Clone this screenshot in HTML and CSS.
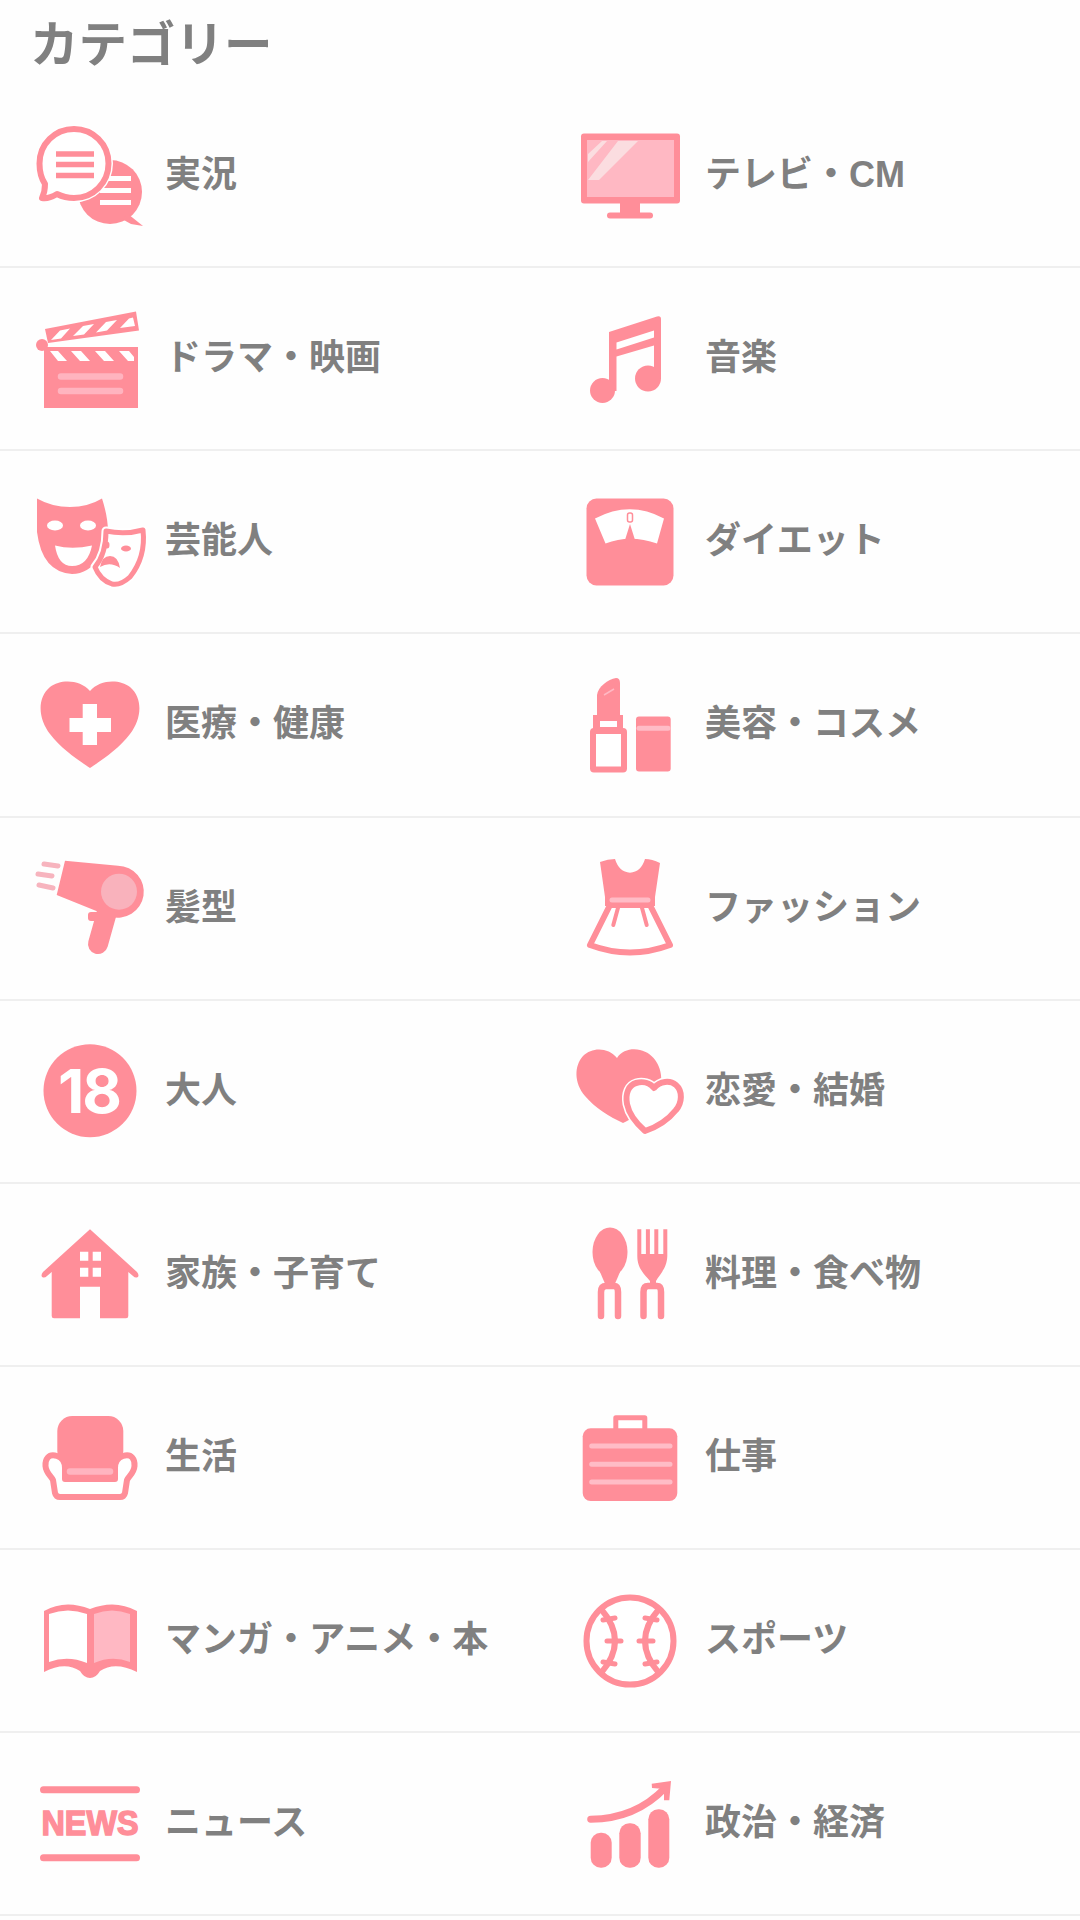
FILE: index.html
```html
<!DOCTYPE html>
<html lang="ja">
<head>
<meta charset="utf-8">
<title>カテゴリー</title>
<link rel="stylesheet" href="styles.css">
</head>
<body>
<main class="page">
<h1 class="title">カテゴリー</h1>
<ul class="grid">

<li class="cell"><svg class="icon" viewBox="0 0 120 120">
<circle class="f" cx="80" cy="76" r="32"/><path class="f" d="M98 98L113 110L101 108L92 103Z"/>
<path class="wl" d="M70 62.500H101M70 74.500H101M70 86.500H101"/>
<circle class="h" cx="44" cy="47.500" r="39"/>
<path class="o6" d="M44 13C63 13 78.500 28 78.500 47.500S63 82 44 82C38 82 32 80.500 27 78C22 81 17 83 12 82C14 78 15 74 15 68C11 62 9.500 55 9.500 47.500C9.500 28 25 13 44 13Z"/>
<path class="fl" d="M26 38H64M26 48.500H64M26 59.500H64"/>
</svg><span class="label">実況</span></li>

<li class="cell"><svg class="icon" viewBox="0 0 120 120">
<rect class="f" x="11" y="17.500" width="99" height="70" rx="3"/>
<rect class="l" x="17" y="24" width="87" height="57"/>
<path class="g" d="M18 38L32 25H37L18 46ZM18 64L48 25H68L29 64Z"/>
<rect class="f" x="50" y="87" width="20" height="11"/><rect class="f" x="37" y="96.500" width="46" height="6" rx="3"/>
</svg><span class="label">テレビ・CM</span></li>

<li class="cell"><svg class="icon" viewBox="0 0 120 120">
<path class="f" d="M15 30L106 12.500L109 31.500L18 44Z"/>
<path class="w" d="M21 41L30 31.500L40 29.500L31 39.500ZM43 37L53 27L64 25L54 35.500ZM66 33.500L76 23L87 21L77 31.500ZM90 29L99 19.500L103 18.500L105 27Z"/>
<circle class="f" cx="12" cy="46" r="6"/>
<rect class="f" x="14" y="48" width="94" height="61"/>
<path class="w" d="M20 52H28L37 62H28ZM41 52H51L60 62H50ZM65 52H75L84 62H74ZM89 52H99L104 58V62H98Z"/>
<path class="ll6" d="M31 77.500H90M31 92H90"/>
</svg><span class="label">ドラマ・映画</span></li>

<li class="cell"><svg class="icon" viewBox="0 0 120 120">
<path class="f" d="M39 33L87 17.500Q91 16.500 91 20L91 80H84V46.500L46.500 57.500V92H39Z"/>
<path class="w" d="M46.500 43.500L84 31.500V38.500L46.500 50.500Z"/>
<circle class="f" cx="32.500" cy="91.500" r="12.500"/><circle class="f" cx="78" cy="79.500" r="13"/>
</svg><span class="label">音楽</span></li>

<li class="cell"><svg class="icon" viewBox="0 0 120 120">
<path class="f" d="M7 16.500Q22 25 40 25Q58 25 72 16.500Q78 35 78 50L72 74Q58 92 42 92Q12 90 7 50Z"/>
<ellipse class="w" cx="25" cy="43.500" rx="8" ry="5"/><ellipse class="w" cx="58" cy="43.500" rx="8" ry="5"/>
<path class="w" d="M25 63.500Q42 68 62 63.500Q58 84 42 84Q28 84 25 63.500Z"/>
<path class="hm" d="M76 49Q95 53 113 48Q116 75 100 95Q90 104 82 102Q70 98 65 85Q76 72 76 49Z"/>
<path class="o" d="M76 49Q95 53 113 48Q116 75 100 95Q90 104 82 102Q70 98 65 85Q76 72 76 49Z"/>
<ellipse class="f" cx="96" cy="66.500" rx="5" ry="3"/><ellipse class="f" cx="77" cy="63" rx="2.500" ry="3.500"/>
<path class="f" d="M70 85Q72 74 80 74Q88 74 90 86Q80 79 70 85Z"/>
</svg><span class="label">芸能人</span></li>

<li class="cell"><svg class="icon" viewBox="0 0 120 120">
<rect class="f" x="16.500" y="16.500" width="87" height="87" rx="10"/>
<path class="w" d="M25 36.500Q60 18 94 36.500L87 61.500Q60 52 35.500 61.500Z"/>
<path class="f" d="M60 42L65 58H55Z"/><rect class="f4" x="57.500" y="31" width="5" height="9" rx="2"/>
</svg><span class="label">ダイエット</span></li>

<li class="cell"><svg class="icon" viewBox="0 0 120 120">
<path class="f" d="M60 26C50 14 30 14 20 22C6 34 9 55 20 69C32 85 50 96 60 103C70 96 88 85 100 69C111 55 114 34 100 22C90 14 70 14 60 26Z"/>
<path class="w" d="M52.700 39H67V53H81V67H67V80H52.700V67H39.500V53H52.700Z"/>
</svg><span class="label">医療・健康</span></li>

<li class="cell"><svg class="icon" viewBox="0 0 120 120">
<path class="f" d="M27 50V30C28 22 38 14 46 13Q50 13 50 18V50Z"/>
<path class="al" d="M34 30L44 24"/>
<rect class="f" x="23" y="50" width="30" height="15"/><rect class="w" x="30" y="56" width="17" height="6"/>
<rect class="o6" x="23" y="66" width="31" height="38.500" rx="1"/>
<rect class="f" x="66" y="51.500" width="34.700" height="55" rx="3"/>
<path class="ll" d="M69 63.300H98"/>
</svg><span class="label">美容・コスメ</span></li>

<li class="cell"><svg class="icon" viewBox="0 0 120 120">
<path class="f" d="M35 12.700L88 17.700A26 26 0 1 1 80 68.500L26.700 47Z"/>
<path class="fr" d="M76.700 65L68 96"/>
<rect class="f" x="58" y="64" width="12" height="9" rx="3"/>
<circle class="d" cx="89" cy="43.700" r="18"/>
<path class="a" d="M14 16L28 18M8 26L22 28M9 37L23 40"/>
</svg><span class="label">髪型</span></li>

<li class="cell"><svg class="icon" viewBox="0 0 120 120">
<path class="f" d="M30 14Q38 11 45 11Q49 24 60 24.700Q71 24 75 11Q82 11 90 15L85 49H35Z"/>
<path class="o6" d="M40 57L20 97Q60 112 100 97L80 57Z"/>
<rect class="f" x="35" y="47" width="50" height="11"/><path class="ll" d="M42 52H78"/>
<path class="o4" d="M48.300 58.700L43.300 77M71.700 58.700L76.700 77"/>
</svg><span class="label">ファッション</span></li>

<li class="cell"><svg class="icon" viewBox="0 0 120 120">
<circle class="f" cx="60" cy="59.700" r="46.500"/>
<text class="num" x="60" y="82" textLength="64">18</text>
</svg><span class="label">大人</span></li>

<li class="cell"><svg class="icon" viewBox="0 0 120 120">
<path class="f" d="M47 27C52 19 62 17 70 19C84 22 93 37 91 52C89 70 70 84 53 92C40 86 25 77 15 65C4 52 4 35 13 25C22 16 38 16 47 27Z"/>
<path class="hm" d="M84 57C90 50 100 49 106 54C113 60 112 72 106 79C98 89 87 96 75 100C67 93 59 83 57 73C55 62 59 54 66 52C73 50 80 52 84 57Z"/>
<path class="o6" d="M84 57C90 50 100 49 106 54C113 60 112 72 106 79C98 89 87 96 75 100C67 93 59 83 57 73C55 62 59 54 66 52C73 50 80 52 84 57Z"/>
</svg><span class="label">恋愛・結婚</span></li>

<li class="cell"><svg class="icon" viewBox="0 0 120 120">
<path class="f" d="M60 15.300L107 58Q110 62 107 63.500Q105 64 103 62L98.300 58V102Q98.300 104.300 96 104.300H70V72.700H50V104.300H24Q21.700 104.300 21.700 102V58L17 62Q15 64 13 63.500Q10 62 13 58Z"/>
<path class="w" d="M50 37.700H58.300V46.700H50ZM62.700 37.700H71V46.700H62.700ZM50 53.700H58.300V62.700H50ZM62.700 53.700H71V62.700H62.700Z"/>
</svg><span class="label">家族・子育て</span></li>

<li class="cell"><svg class="icon" viewBox="0 0 120 120">
<ellipse class="f" cx="40" cy="38" rx="17.500" ry="24.500"/>
<path class="f" d="M30 58L36 72H44L50 58Z"/>
<path class="o5" d="M31 102V78Q31 72 36 72H44Q48 72 48 78V102"/>
<path class="o5" d="M73.500 102V78Q73.500 72 78 72H87Q91 72 91 78V102"/>
<path class="f" d="M67.300 15.300H71.300V40H75.900V15.300H79.900V40H84.300V15.300H88.300V40H93.300V15.300H97.300V42C97 54 90 60 86 67V74H80V67C74 60 67.300 54 67.300 42Z"/>
</svg><span class="label">料理・食べ物</span></li>

<li class="cell"><svg class="icon" viewBox="0 0 120 120">
<path class="o6" d="M27 58C18 55 15 62 15.500 68C16 75 21 78 23 82L25 95Q26 99 30 99H90Q94 99 95 95L97 82C99 78 104 75 104.500 68C105 62 102 55 93 58C87 60 85 65 85 70V81H35V70C35 65 33 60 27 58Z"/>
<rect class="f" x="27.300" y="18" width="66" height="50" rx="15"/>
<rect class="f" x="35" y="64" width="50" height="17.500" rx="4"/>
<path class="ll6" d="M40 73.500H80"/>
</svg><span class="label">生活</span></li>

<li class="cell"><svg class="icon" viewBox="0 0 120 120">
<rect class="o" x="45.800" y="19.800" width="29" height="15"/>
<rect class="f" x="12.700" y="30.300" width="94.600" height="72.700" rx="8"/>
<path class="ll" d="M21.700 48H100M21.700 66.300H100M21.700 84H100"/>
</svg><span class="label">仕事</span></li>

<li class="cell"><svg class="icon" viewBox="0 0 120 120">
<path class="f" d="M14 30Q35 18 60 28Q85 18 107 30V91Q85 80 70 90Q66 97 60 97Q54 97 50 90Q35 80 14 91Z"/>
<path class="w" d="M19 33Q38 26 57 33V82Q38 74 19 81Z"/>
<path class="l" d="M64 33Q82 26 100 33V81Q82 74 64 82Z"/>
</svg><span class="label">マンガ・アニメ・本</span></li>

<li class="cell"><svg class="icon" viewBox="0 0 120 120">
<circle class="o6" cx="60" cy="60" r="43.500"/>
<path class="o6n" d="M31 28Q59 60 31 92M89 28Q61 60 89 92"/>
<path class="st" d="M33 39L45 37M37 60H51M33 81L45 83M87 39L75 37M83 60H69M87 81L75 83"/>
</svg><span class="label">スポーツ</span></li>

<li class="cell"><svg class="icon" viewBox="0 0 120 120">
<path class="fb" d="M13.500 25.700H106.500M13.500 93.700H106.500"/>
<text class="news" x="60" y="71" textLength="97" lengthAdjust="spacingAndGlyphs">NEWS</text>
</svg><span class="label">ニュース</span></li>

<li class="cell"><svg class="icon" viewBox="0 0 120 120">
<rect class="f" x="20.700" y="68.700" width="21" height="35" rx="10"/>
<rect class="f" x="49.300" y="59.300" width="21.400" height="44.400" rx="10"/>
<rect class="f" x="78.300" y="45.300" width="21" height="58.400" rx="10"/>
<path class="fb" d="M20.700 55.300C50 55 75 45 95 24"/>
<path class="f" d="M81.700 19.700L101 17L99.300 36.300H94V25L82 24Z"/>
</svg><span class="label">政治・経済</span></li>

</ul>
</main>
</body>
</html>
```

FILE: styles.css
```css
* { box-sizing: border-box; }
html, body { margin: 0; padding: 0; background: #fefefe; }
.page { width: 1080px; font-family: "Liberation Sans", "Noto Sans CJK JP", sans-serif; color: #808080; }
.title { margin: 0; height: 85px; padding-left: 30px; font-size: 48.500px; line-height: 91px; font-weight: 700; }
.grid { margin: 0; padding: 0; list-style: none; display: grid; grid-template-columns: 540px 540px; grid-auto-rows: 183.150px; }
.cell { display: flex; align-items: center; gap: 15px; padding-left: 30px; border-bottom: 2px solid #efefef; }
.icon { width: 120px; height: 120px; flex: none; }
.label { font-size: 36px; line-height: 50px; font-weight: 700; margin-top: -1px; white-space: nowrap; }

.f { fill: #ff8e99; }
.w { fill: #fff; }
.l { fill: #ffb8c3; }
.g { fill: #fbdde0; }
.d { fill: #f9b2bc; }
.h { fill: #fff; }
.hm { fill: #fff; stroke: #fff; stroke-width: 9; stroke-linejoin: round; }
.o { fill: #fff; stroke: #ff8e99; stroke-width: 5; stroke-linejoin: round; }
.o6 { fill: #fff; stroke: #ff8e99; stroke-width: 6; stroke-linejoin: round; }
.o6n { fill: none; stroke: #ff8e99; stroke-width: 6; }
.o4 { fill: none; stroke: #ff8e99; stroke-width: 4; stroke-linecap: round; stroke-linejoin: round; }
.o5 { fill: none; stroke: #ff8e99; stroke-width: 6.500; stroke-linecap: round; }
.st { fill: none; stroke: #ff8e99; stroke-width: 5; stroke-linecap: round; }
.fl { fill: none; stroke: #ff8e99; stroke-width: 5.500; }
.wl { fill: none; stroke: #fff; stroke-width: 5; }
.ll { fill: none; stroke: #ffbcc6; stroke-width: 5; stroke-linecap: round; }
.ll6 { fill: none; stroke: #ffb4bf; stroke-width: 6.500; stroke-linecap: round; }
.al { fill: none; stroke: #ffb8c3; stroke-width: 1.500; }
.fr { fill: none; stroke: #ff8e99; stroke-width: 20; stroke-linecap: round; }
.fb { fill: none; stroke: #ff8e99; stroke-width: 7; stroke-linecap: round; }
.a { fill: none; stroke: #f7b4be; stroke-width: 5; stroke-linecap: round; }
.f4 { fill: #fff; stroke: #ff8e99; stroke-width: 1.500; }
.num { fill: #fff; font-family: "Inter", sans-serif; font-size: 61px; font-weight: 700; text-anchor: middle; }
.news { fill: #ff8e99; stroke: #ff8e99; stroke-width: 1.500; font-family: "Liberation Sans", sans-serif; font-size: 35px; font-weight: 700; text-anchor: middle; }
```
